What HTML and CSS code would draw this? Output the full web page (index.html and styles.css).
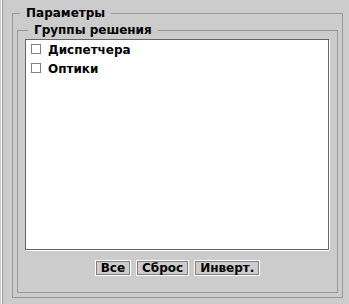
FILE: index.html
```html
<!DOCTYPE html>
<html>
<head>
<meta charset="utf-8">
<link rel="stylesheet" href="styles.css">
</head>
<body>
<div class="frame">
  <div class="frame-inner">
    <fieldset class="group outer">
      <legend class="caption outer-caption">Параметры</legend>
      <fieldset class="group inner">
        <legend class="caption inner-caption">Группы решения</legend>
        <div class="list">
          <label class="item"><span class="box"></span><span class="label">Диспетчера</span></label>
          <label class="item"><span class="box"></span><span class="label">Оптики</span></label>
        </div>
        <div class="buttons">
          <button class="btn">Все</button>
          <button class="btn">Сброс</button>
          <button class="btn">Инверт.</button>
        </div>
      </fieldset>
    </fieldset>
  </div>
</div>
</body>
</html>
```

FILE: styles.css
```css
html, body {
  margin: 0;
  padding: 0;
  background: #cccccc;
}
body {
  width: 349px;
  height: 304px;
  overflow: hidden;
  font-family: "DejaVu Sans", sans-serif;
  font-size: 12px;
  font-weight: bold;
  color: #000;
}
.frame {
  margin-left: 1px;
  border-left: 1px solid #ffffff;
  height: 304px;
}
.frame-inner {
  border-left: 1px solid #999999;
  height: 304px;
  box-sizing: border-box;
  padding: 6px 0 0 9px;
}
.group {
  margin: 0;
  border: 1px solid #999999;
  min-width: 0;
}
.outer {
  width: 331px;
  box-sizing: border-box;
  padding: 3px 4px 4px 4px;
}
.inner {
  padding: 2px 7px 17px 7px;
}
.caption {
  padding: 0 6px;
  line-height: 14px;
  font-size: 12px;
  font-weight: bold;
}
.outer-caption {
  margin-left: 3px;
}
.inner-caption {
  margin-left: 3px;
}
.list {
  height: 211px;
  box-sizing: border-box;
  border: 1px solid #666666;
  box-shadow: 1px 1px 0 #ffffff;
  background: #ffffff;
  margin-right: 1px;
  padding-top: 1px;
}
.item {
  display: flex;
  align-items: center;
  height: 19px;
  padding-left: 5px;
}
.box {
  width: 8px;
  height: 8px;
  border: 1px solid #808080;
  background: #ffffff;
  margin-right: 7px;
  margin-top: -3px;
}
.label {
  line-height: 19px;
}
.buttons {
  display: flex;
  justify-content: center;
  gap: 7px;
  margin-top: 11px;
}
.btn {
  box-sizing: border-box;
  font-family: "DejaVu Sans", sans-serif;
  font-size: 12px;
  font-weight: bold;
  color: #000;
  background: #cccccc;
  border: 1px solid #808080;
  box-shadow: 0 0 0 1px #ffffff;
  height: 14px;
  line-height: 12px;
  padding: 0 4px;
  margin: 0;
}
```
